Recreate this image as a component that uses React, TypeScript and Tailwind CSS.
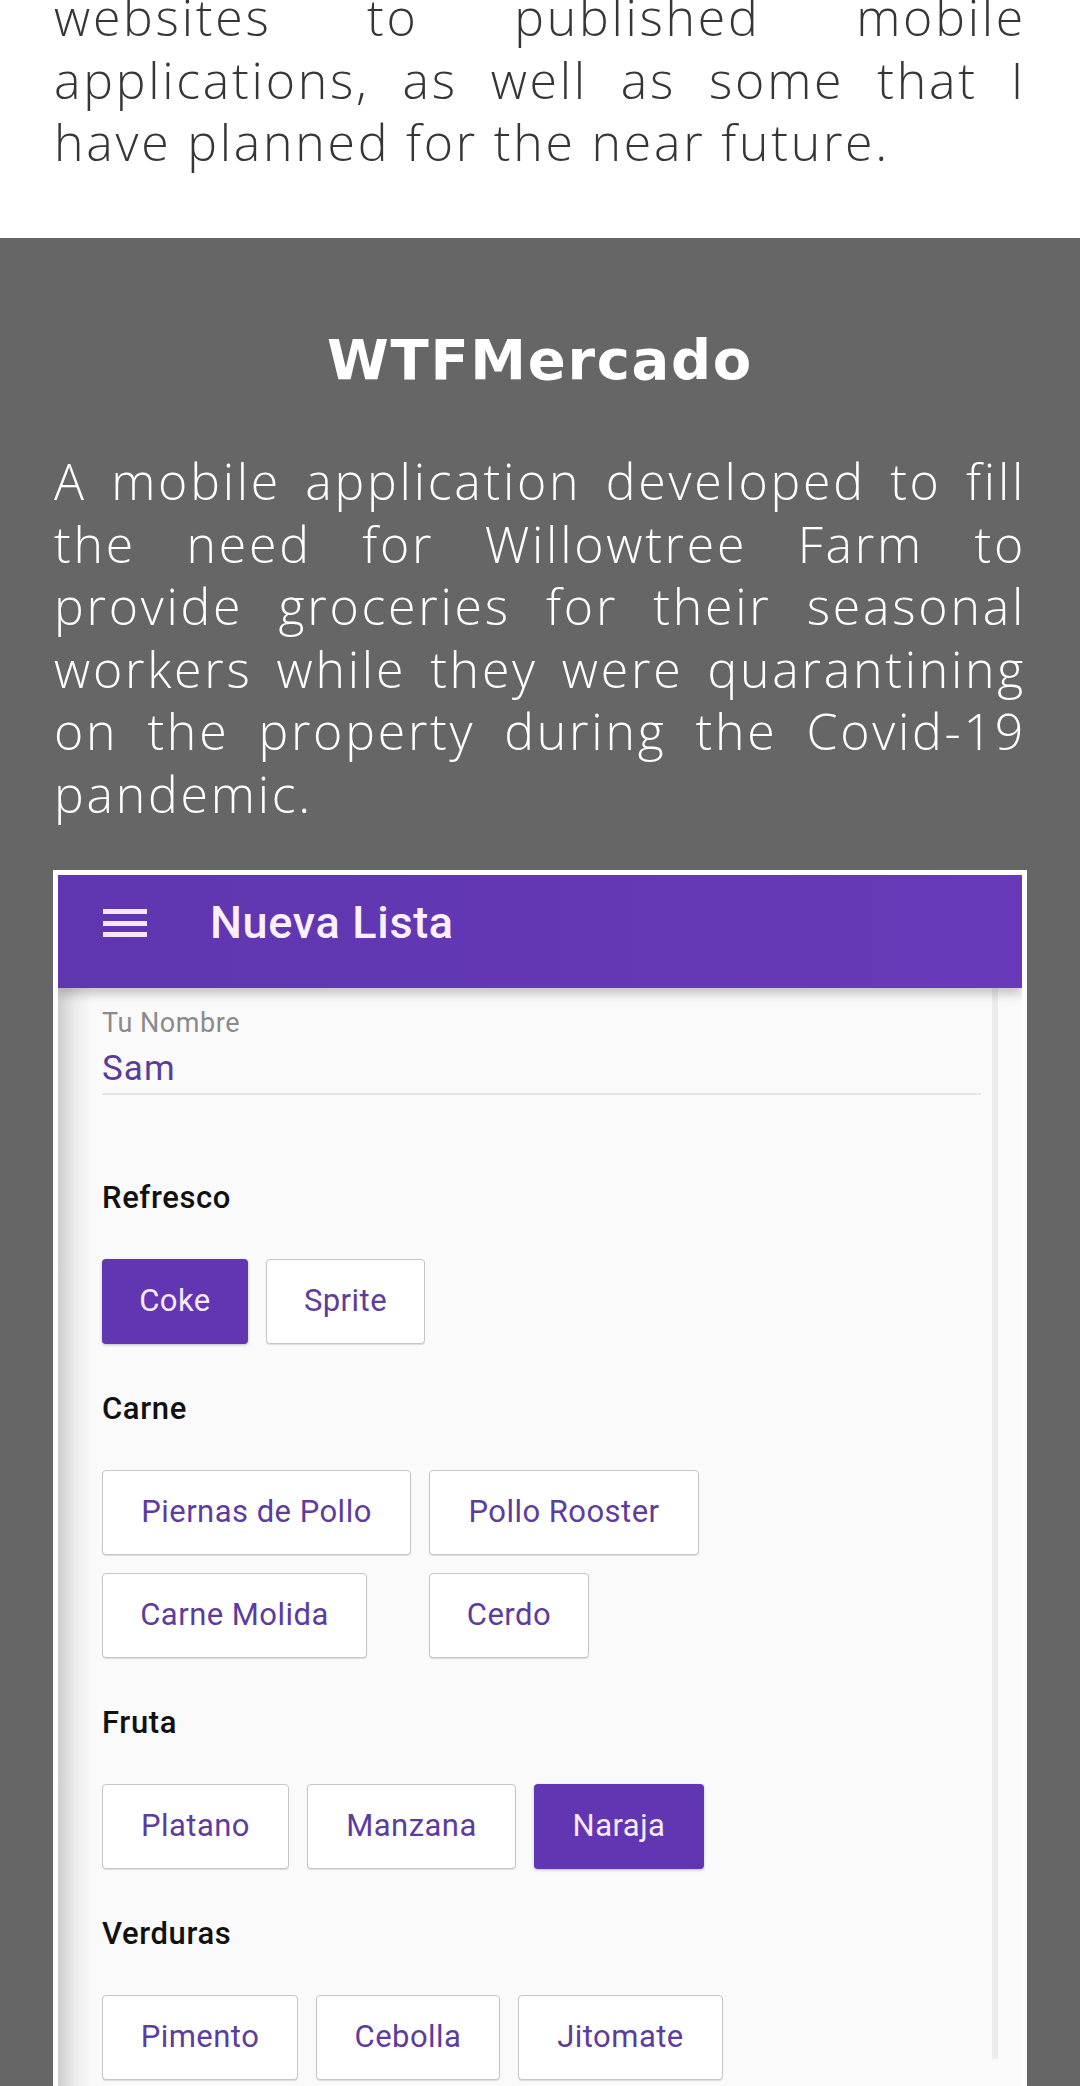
import React from 'react';

type Chip = { label: string; width: string; selected?: boolean; offset?: string };

const SECTIONS: { title: string; rows: Chip[][] }[] = [
  {
    title: 'Refresco',
    rows: [[
      { label: 'Coke', width: 'w-[146px]', selected: true },
      { label: 'Sprite', width: 'w-[159px]' },
    ]],
  },
  {
    title: 'Carne',
    rows: [
      [
        { label: 'Piernas de Pollo', width: 'w-[309px]' },
        { label: 'Pollo Rooster', width: 'w-[270px]' },
      ],
      [
        { label: 'Carne Molida', width: 'w-[265px]' },
        { label: 'Cerdo', width: 'w-[160px]', offset: 'ml-[44px]' },
      ],
    ],
  },
  {
    title: 'Fruta',
    rows: [[
      { label: 'Platano', width: 'w-[187px]' },
      { label: 'Manzana', width: 'w-[209px]' },
      { label: 'Naraja', width: 'w-[170px]', selected: true },
    ]],
  },
  {
    title: 'Verduras',
    rows: [[
      { label: 'Pimento', width: 'w-[196px]' },
      { label: 'Cebolla', width: 'w-[184px]' },
      { label: 'Jitomate', width: 'w-[205px]' },
    ]],
  },
];

function ChipButton({ chip }: { chip: Chip }) {
  return (
    <div
      className={`${chip.width} ${chip.offset ?? ''} h-[85px] shrink-0 rounded-[4px] flex items-center justify-center text-[31px] tracking-[0.015em] ${
        chip.selected
          ? 'bg-[#6236b2] text-[#f6eafb] shadow-[0_1px_3px_rgba(0,0,0,0.25)]'
          : 'bg-white text-[#5c3c9e] border border-[#c6c6c6] shadow-[0_1px_1px_rgba(0,0,0,0.12)]'
      }`}
    >
      {chip.label}
    </div>
  );
}

function PhoneShot() {
  return (
    <div className="mx-[53px] bg-white px-[5px] pt-[5px]">
      <div className="relative bg-[#fafafa] font-['Roboto',sans-serif] overflow-hidden">
        {/* app bar */}
        <div className="relative z-10 h-[113px] bg-gradient-to-r from-[#5f36b0] to-[#6839b8] flex items-center pb-[17px] shadow-[0_6px_10px_rgba(0,0,0,0.22)]">
          <div className="ml-[45px] w-[44px] flex flex-col gap-[6.5px]">
            <div className="h-[5px] bg-[#f6e6fb]" />
            <div className="h-[5px] bg-[#f6e6fb]" />
            <div className="h-[5px] bg-[#f6e6fb]" />
          </div>
          <div className="ml-[63px] text-[45px] font-medium text-[#fbf0fd] tracking-[0.015em]">Nueva Lista</div>
        </div>

        {/* drawer edge shade + scroll line */}
        <div className="absolute left-0 top-[113px] bottom-0 w-[34px] bg-gradient-to-r from-[#cdcdcd] via-[#ebebeb] to-transparent" />
        <div className="absolute right-[24px] top-[113px] h-[1071px] w-[6px] bg-[#ececec]" />

        <div className="relative pl-[44px] pr-[41px] pt-[20px] pb-[120px]">
          <div className="text-[27px] leading-[30px] text-[#8b8b8b] tracking-[0.02em]">Tu Nombre</div>
          <div className="mt-[11px] text-[35px] leading-[40px] text-[#5a3d99] tracking-[0.03em]">Sam</div>
          <div className="mt-[4px] h-[2px] bg-[#e6e6e6]" />

          <div className="mt-[85px] flex flex-col gap-[47px]">
            {SECTIONS.map((s) => (
              <div key={s.title}>
                <div className="text-[31px] leading-[36px] font-medium text-[#111] tracking-[0.02em]">{s.title}</div>
                <div className="mt-[43px] flex flex-col gap-[18px]">
                  {s.rows.map((row, i) => (
                    <div key={i} className="flex gap-[18px]">
                      {row.map((c) => (
                        <ChipButton key={c.label} chip={c} />
                      ))}
                    </div>
                  ))}
                </div>
              </div>
            ))}
          </div>
        </div>
      </div>
    </div>
  );
}

export default function App() {
  return (
    <div className="w-[1080px] min-h-[2086px] bg-[#666666] font-['Open_Sans',sans-serif]">
      {/* intro tail */}
      <div className="bg-white overflow-hidden h-[238px]">
        <p className="mt-[-14px] px-[54px] text-justify text-[50px] leading-[62.5px] font-light text-[#363636] tracking-[0.055em]">
          websites to published mobile applications, as well as some that I have planned for the near future.
        </p>
      </div>

      {/* project */}
      <div className="pt-[90px]">
        <h2 className="text-center text-[56px] leading-[64px] font-bold text-white tracking-[0.03em] font-['DejaVu_Sans',sans-serif]">WTFMercado</h2>
        <p className="mt-[58px] px-[54px] text-justify text-[50px] leading-[62.5px] font-light text-white tracking-[0.055em]">
          A mobile application developed to fill the need for Willowtree Farm to provide groceries for their seasonal workers while they were quarantining on the property during the Covid-19 pandemic.
        </p>
        <div className="mt-[45px]">
          <PhoneShot />
        </div>
      </div>
    </div>
  );
}
